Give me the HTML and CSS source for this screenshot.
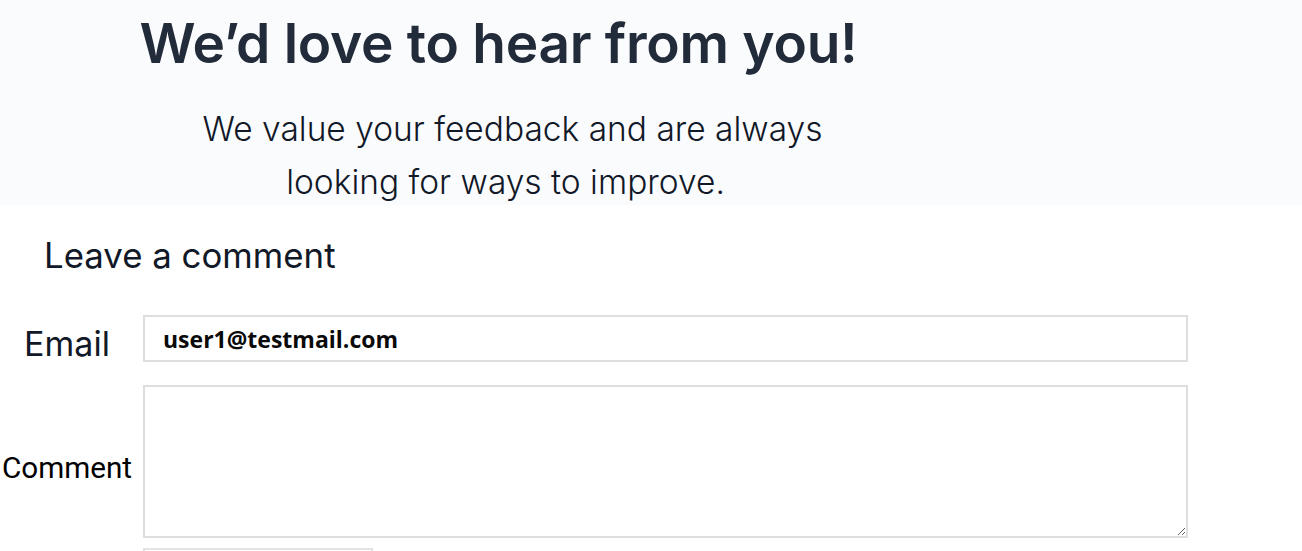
FILE: index.html
```html
<!DOCTYPE html>
<html lang="en">
<head>
<meta charset="utf-8">
<title>Feedback</title>
<link rel="stylesheet" href="styles.css">
</head>
<body>
<header class="hero">
  <h1 class="hero-title">We’d love to hear from you!</h1>
  <p class="hero-sub">We value your feedback and are always<br><span class="sub-line">looking for ways to improve.</span></p>
</header>
<main class="comment-section">
  <h2 class="comment-title">Leave a comment</h2>
  <form class="comment-form">
    <div class="form-row">
      <label class="form-label label-email" for="email">Email</label>
      <input class="form-input" id="email" type="email" value="user1@testmail.com">
    </div>
    <div class="form-row">
      <label class="form-label label-comment" for="comment">Comment</label>
      <textarea class="form-textarea" id="comment"></textarea>
    </div>
    <div class="form-actions">
      <button class="submit-btn" type="button" aria-label="Submit"></button>
    </div>
  </form>
</main>
</body>
</html>
```

FILE: styles.css
```css
* { box-sizing: border-box; }
body {
  margin: 0;
  background: #ffffff;
  font-family: Inter, "Noto Sans", sans-serif;
}
.hero {
  height: 205px;
  background: #fafbfd;
  width: 100%;
  padding-top: 10px;
}
.hero-title {
  width: 997px;
  margin: 0;
  text-align: center;
  font-size: 55px;
  line-height: 66px;
  font-weight: 600;
  letter-spacing: -0.005em;
  color: #222b3a;
}
.hero-sub {
  width: 1025px;
  margin: 27px 0 0 0;
  text-align: center;
  font-size: 33.5px;
  line-height: 53px;
  font-weight: 300;
  color: #111827;
}
.sub-line {
  display: inline-block;
  padding-right: 14px;
}
.comment-section {
  padding-top: 29px;
}
.comment-title {
  margin: 0 0 39px 44px;
  font-size: 34.8px;
  line-height: 42px;
  font-weight: 400;
  color: #111827;
}
.comment-form {
  display: flex;
  flex-direction: column;
  gap: 23px;
}
.form-row {
  display: flex;
  align-items: center;
  gap: 9px;
}
.form-label {
  width: 134px;
  text-align: center;
  line-height: 1.2;
  padding-top: 6px;
  margin-bottom: -6px;
}
.label-email {
  font-family: Inter, sans-serif;
  font-size: 34px;
  color: #111827;
}
.label-comment {
  font-family: Roboto, "Liberation Sans", sans-serif;
  font-size: 29.7px;
  color: #000;
}
.form-input {
  width: 1045px;
  height: 47px;
  border: 2px solid #dedede;
  border-radius: 0;
  padding: 0 0 0 18px;
  font-family: "Open Sans", sans-serif;
  font-weight: 700;
  font-size: 23px;
  color: #0a0a0a;
  background: #fff;
  outline: none;
}
.form-textarea {
  width: 1045px;
  height: 153px;
  border: 2px solid #dedede;
  border-radius: 0;
  background: #fff;
  outline: none;
  font-family: "Open Sans", sans-serif;
}
.form-actions {
  margin-top: -13px;
  padding-left: 143px;
}
.submit-btn {
  width: 230px;
  height: 42px;
  border: 2px solid #e3e3e3;
  background: #fff;
}
```
